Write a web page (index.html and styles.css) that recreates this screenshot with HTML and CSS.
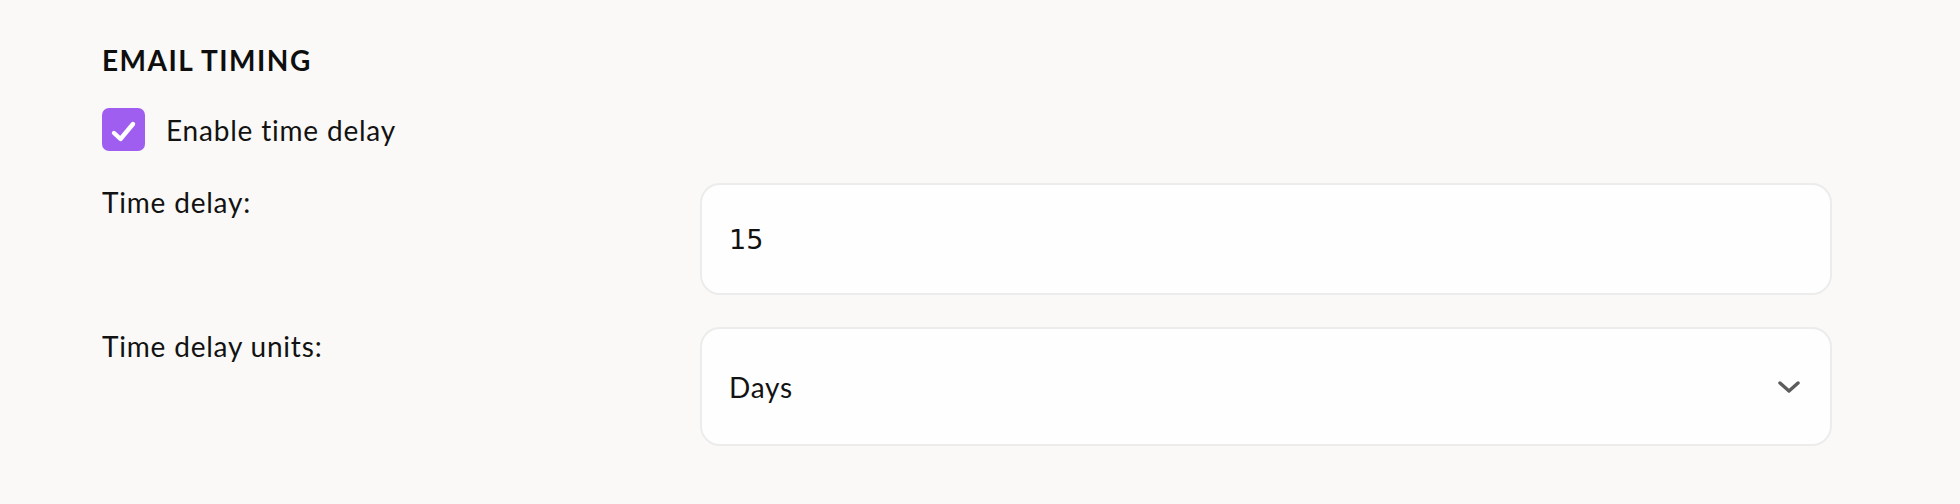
FILE: index.html
```html
<!DOCTYPE html>
<html lang="en">
<head>
<meta charset="utf-8">
<title>Email timing</title>
<link rel="stylesheet" href="styles.css">
</head>
<body>
<section class="panel">
  <h2 class="title">EMAIL TIMING</h2>
  <label class="check">
    <span class="box">
      <svg width="43" height="43" viewBox="0 0 43 43"><polyline points="12,25 18.5,31 31,16" fill="none" stroke="#fff" stroke-width="4.4" stroke-linecap="round" stroke-linejoin="round"/></svg>
    </span>
    <span class="check-text">Enable time delay</span>
  </label>
  <div class="form">
    <div class="label">Time delay:</div>
    <input class="field field-input" type="text" value="15">
    <div class="label">Time delay units:</div>
    <div class="field field-select">
      <span class="select-value">Days</span>
      <svg class="chev" width="24" height="14" viewBox="0 0 24 14"><polyline points="3,3 12,11 21,3" fill="none" stroke="#5c5c5c" stroke-width="3.4" stroke-linecap="round" stroke-linejoin="round"/></svg>
    </div>
  </div>
</section>
</body>
</html>
```
FILE: styles.css
```css
html, body {
  margin: 0;
  padding: 0;
  background: #faf9f7;
}
body {
  font-family: "Lato", "Noto Sans", sans-serif;
  color: #121212;
  letter-spacing: 0.8px;
}
.panel {
  padding: 40px 128px 0 102px;
}
.title {
  margin: 0;
  font-size: 28px;
  line-height: 40px;
  font-weight: 700;
  letter-spacing: 1.5px;
  color: #0e0e0e;
}
.check {
  display: flex;
  align-items: center;
  gap: 21px;
  margin-top: 28px;
}
.box {
  width: 43px;
  height: 43px;
  border-radius: 7px;
  background: #a05ef0;
  display: flex;
  align-items: center;
  justify-content: center;
}
.box svg {
  display: block;
}
.check-text {
  font-size: 28px;
  line-height: 38px;
}
.form {
  margin-top: 32px;
  display: grid;
  grid-template-columns: 1fr 2fr;
  column-gap: 32px;
  row-gap: 32px;
}
.label {
  font-size: 28px;
  line-height: 38px;
}
.field {
  box-sizing: border-box;
  width: 100%;
  background: #fefefe;
  border: 2px solid #ececec;
  border-radius: 20px;
  margin: 0;
}
.field-input {
  height: 112px;
  padding: 0 27px;
  font-family: "DejaVu Sans", sans-serif;
  font-size: 27px;
  letter-spacing: 0;
  color: #111;
  outline: none;
}
.field-select {
  height: 119px;
  padding: 0 29px 0 27px;
  display: flex;
  align-items: center;
  justify-content: space-between;
  font-size: 28px;
}
.chev {
  display: block;
}
```
